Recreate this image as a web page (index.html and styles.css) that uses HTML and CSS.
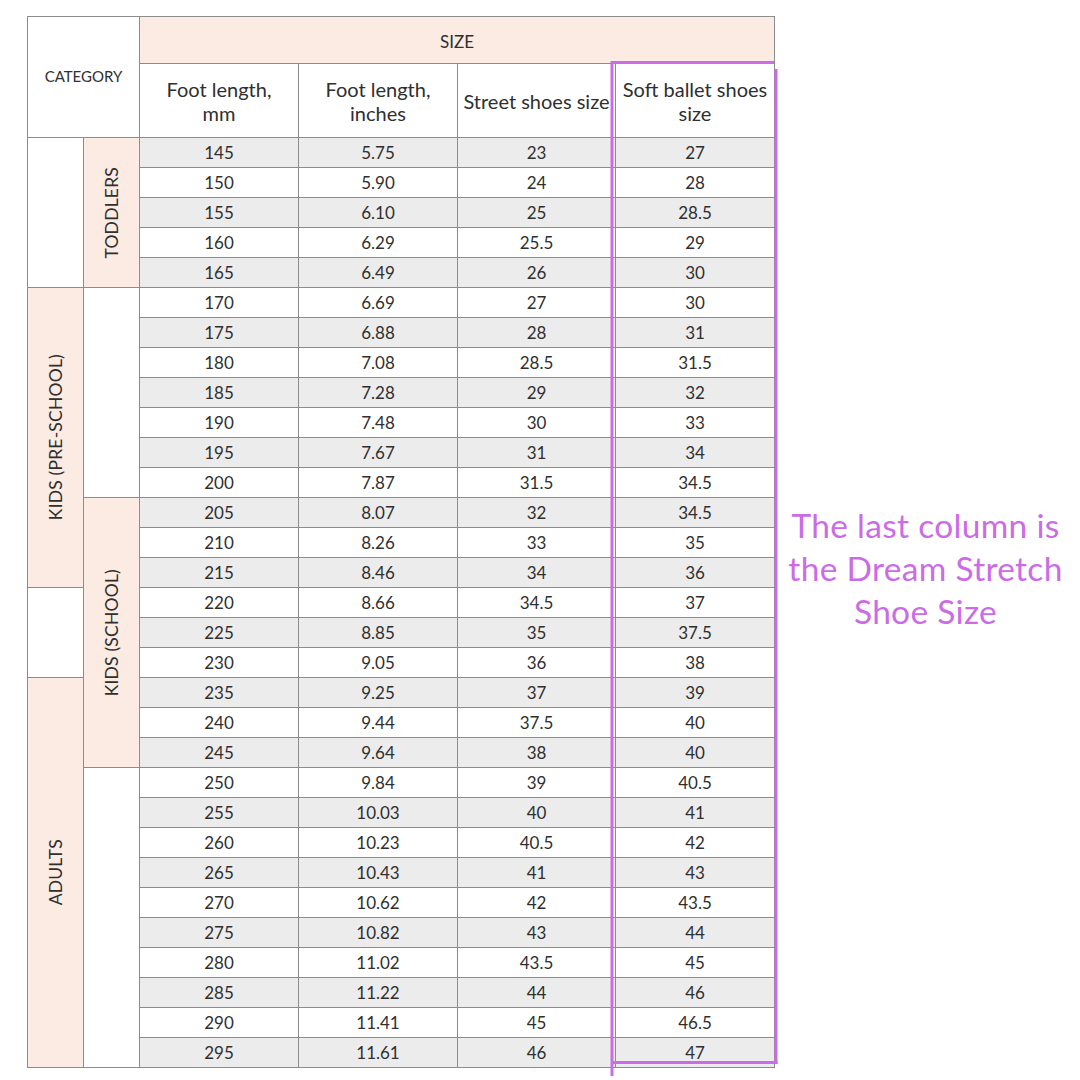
FILE: index.html
```html
<!DOCTYPE html>
<html lang="en">
<head>
<meta charset="utf-8">
<title>Size chart</title>
<link rel="stylesheet" href="styles.css">
</head>
<body>
<div class="page">
  <div class="chart">
    <div class="grid">
      <div class="cell cat-head">CATEGORY</div>
      <div class="cell size-head">SIZE</div>
      <div class="cell col-head">Foot length,<br>mm</div>
      <div class="cell col-head">Foot length,<br>inches</div>
      <div class="cell col-head">Street shoes size</div>
      <div class="cell col-head">Soft ballet shoes<br>size</div>

      <div class="cell group c1 r-todd"></div>
      <div class="cell group c1 r-pre peach"><span class="vtext">KIDS (PRE-SCHOOL)</span></div>
      <div class="cell group c1 r-gap"></div>
      <div class="cell group c1 r-adult peach"><span class="vtext">ADULTS</span></div>
      <div class="cell group c2 r-todd peach"><span class="vtext">TODDLERS</span></div>
      <div class="cell group c2 r-pre2"></div>
      <div class="cell group c2 r-school peach"><span class="vtext">KIDS (SCHOOL)</span></div>
      <div class="cell group c2 r-adult2"></div>

      <div class="row alt"><div class="cell">145</div><div class="cell">5.75</div><div class="cell">23</div><div class="cell">27</div></div>
      <div class="row"><div class="cell">150</div><div class="cell">5.90</div><div class="cell">24</div><div class="cell">28</div></div>
      <div class="row alt"><div class="cell">155</div><div class="cell">6.10</div><div class="cell">25</div><div class="cell">28.5</div></div>
      <div class="row"><div class="cell">160</div><div class="cell">6.29</div><div class="cell">25.5</div><div class="cell">29</div></div>
      <div class="row alt"><div class="cell">165</div><div class="cell">6.49</div><div class="cell">26</div><div class="cell">30</div></div>
      <div class="row"><div class="cell">170</div><div class="cell">6.69</div><div class="cell">27</div><div class="cell">30</div></div>
      <div class="row alt"><div class="cell">175</div><div class="cell">6.88</div><div class="cell">28</div><div class="cell">31</div></div>
      <div class="row"><div class="cell">180</div><div class="cell">7.08</div><div class="cell">28.5</div><div class="cell">31.5</div></div>
      <div class="row alt"><div class="cell">185</div><div class="cell">7.28</div><div class="cell">29</div><div class="cell">32</div></div>
      <div class="row"><div class="cell">190</div><div class="cell">7.48</div><div class="cell">30</div><div class="cell">33</div></div>
      <div class="row alt"><div class="cell">195</div><div class="cell">7.67</div><div class="cell">31</div><div class="cell">34</div></div>
      <div class="row"><div class="cell">200</div><div class="cell">7.87</div><div class="cell">31.5</div><div class="cell">34.5</div></div>
      <div class="row alt"><div class="cell">205</div><div class="cell">8.07</div><div class="cell">32</div><div class="cell">34.5</div></div>
      <div class="row"><div class="cell">210</div><div class="cell">8.26</div><div class="cell">33</div><div class="cell">35</div></div>
      <div class="row alt"><div class="cell">215</div><div class="cell">8.46</div><div class="cell">34</div><div class="cell">36</div></div>
      <div class="row"><div class="cell">220</div><div class="cell">8.66</div><div class="cell">34.5</div><div class="cell">37</div></div>
      <div class="row alt"><div class="cell">225</div><div class="cell">8.85</div><div class="cell">35</div><div class="cell">37.5</div></div>
      <div class="row"><div class="cell">230</div><div class="cell">9.05</div><div class="cell">36</div><div class="cell">38</div></div>
      <div class="row alt"><div class="cell">235</div><div class="cell">9.25</div><div class="cell">37</div><div class="cell">39</div></div>
      <div class="row"><div class="cell">240</div><div class="cell">9.44</div><div class="cell">37.5</div><div class="cell">40</div></div>
      <div class="row alt"><div class="cell">245</div><div class="cell">9.64</div><div class="cell">38</div><div class="cell">40</div></div>
      <div class="row"><div class="cell">250</div><div class="cell">9.84</div><div class="cell">39</div><div class="cell">40.5</div></div>
      <div class="row alt"><div class="cell">255</div><div class="cell">10.03</div><div class="cell">40</div><div class="cell">41</div></div>
      <div class="row"><div class="cell">260</div><div class="cell">10.23</div><div class="cell">40.5</div><div class="cell">42</div></div>
      <div class="row alt"><div class="cell">265</div><div class="cell">10.43</div><div class="cell">41</div><div class="cell">43</div></div>
      <div class="row"><div class="cell">270</div><div class="cell">10.62</div><div class="cell">42</div><div class="cell">43.5</div></div>
      <div class="row alt"><div class="cell">275</div><div class="cell">10.82</div><div class="cell">43</div><div class="cell">44</div></div>
      <div class="row"><div class="cell">280</div><div class="cell">11.02</div><div class="cell">43.5</div><div class="cell">45</div></div>
      <div class="row alt"><div class="cell">285</div><div class="cell">11.22</div><div class="cell">44</div><div class="cell">46</div></div>
      <div class="row"><div class="cell">290</div><div class="cell">11.41</div><div class="cell">45</div><div class="cell">46.5</div></div>
      <div class="row alt"><div class="cell">295</div><div class="cell">11.61</div><div class="cell">46</div><div class="cell">47</div></div>
    </div>
    <svg class="highlight" width="1080" height="1080" viewBox="0 0 1080 1080" aria-hidden="true">
      <g stroke="#cb6ce6" stroke-width="3" fill="none">
        <line x1="612" y1="61" x2="612" y2="1076"/>
        <line x1="611" y1="62.5" x2="774" y2="62.5"/>
        <line x1="776" y1="69" x2="776" y2="1064"/>
        <line x1="612" y1="1062.5" x2="777.5" y2="1062.5"/>
      </g>
    </svg>
  </div>
  <div class="note">The last column is<br>the Dream Stretch<br>Shoe Size</div>
</div>
</body>
</html>
```

FILE: styles.css
```css
html, body {
  margin: 0;
  padding: 0;
  background: #ffffff;
}

body {
  font-family: Lato, "Open Sans", "Liberation Sans", sans-serif;
  color: #2f2f2f;
}

.page {
  position: relative;
  width: 1080px;
  height: 1080px;
  display: flex;
  align-items: flex-start;
}

.chart {
  padding: 16px 0 0 27px;
}

.grid {
  display: grid;
  grid-template-columns: 56px 56px 159px 159px 158px 159px;
  grid-template-rows: 47px 74px repeat(31, 30px);
  border-top: 1px solid #8c8c8c;
  border-left: 1px solid #8c8c8c;
  width: max-content;
}

.row {
  display: contents;
}

.cell {
  box-sizing: border-box;
  border-right: 1px solid #8c8c8c;
  border-bottom: 1px solid #8c8c8c;
  display: flex;
  align-items: center;
  justify-content: center;
  text-align: center;
  font-size: 17px;
  line-height: 20px;
  background: #ffffff;
}

.row.alt > .cell {
  background: #ececec;
}

.cat-head {
  grid-column: 1 / 3;
  grid-row: 1 / 3;
  font-size: 15px;
  padding-bottom: 2px;
}

.size-head {
  grid-column: 3 / 7;
  grid-row: 1;
  background: #fcebe2;
  font-size: 17px;
  padding-top: 4px;
}

.col-head {
  font-size: 20px;
  line-height: 24px;
  white-space: nowrap;
}

.c1 { grid-column: 1; }
.c2 { grid-column: 2; }

.r-todd { grid-row: 3 / 8; }
.r-pre { grid-row: 8 / 18; }
.r-gap { grid-row: 18 / 21; }
.r-adult { grid-row: 21 / 34; }
.r-pre2 { grid-row: 8 / 15; }
.r-school { grid-row: 15 / 24; }
.r-adult2 { grid-row: 24 / 34; }

.peach {
  background: #fcebe2;
}

.vtext {
  writing-mode: vertical-rl;
  transform: rotate(180deg);
  font-size: 17.5px;
  letter-spacing: 0.2px;
  white-space: nowrap;
}

.highlight {
  position: absolute;
  left: 0;
  top: 0;
  pointer-events: none;
}

.note {
  flex: 1;
  margin-top: 504px;
  padding-right: 4px;
  text-align: center;
  color: #cb6ce6;
  font-size: 33.5px;
  line-height: 43px;
  letter-spacing: 0.3px;
  white-space: nowrap;
}
```
